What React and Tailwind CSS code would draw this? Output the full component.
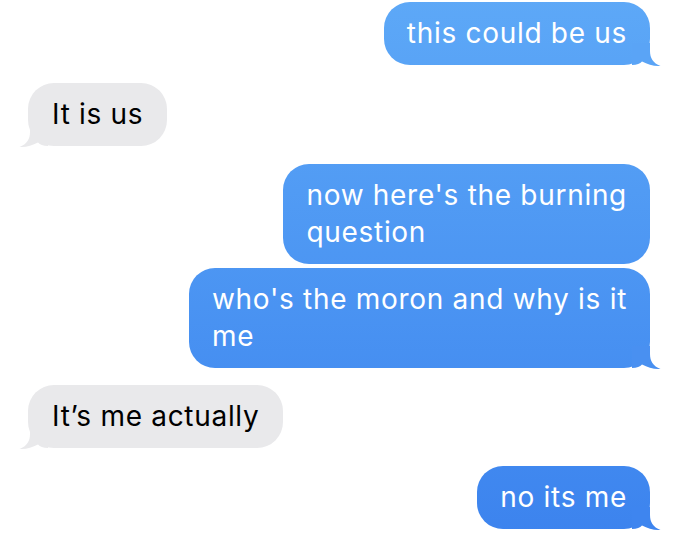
const messages = [
  { id: 1, me: true, lines: ['this could be us'], mt: 'mt-[2px]', tail: '#5aa4f6' },
  { id: 2, me: false, lines: ['It is us'], mt: 'mt-[18px]' },
  { id: 3, me: true, lines: ["now here's the burning", 'question'], mt: 'mt-[18px]' },
  { id: 4, me: true, lines: ["who's the moron and why is it", 'me'], mt: 'mt-[4px]', tail: '#4990f1' },
  { id: 5, me: false, lines: ['It\u2019s me actually'], mt: 'mt-[17px]' },
  { id: 6, me: true, lines: ['no its me'], mt: 'mt-[18px]', tail: '#3e85ef' },
];

export default function App() {
  return (
    <main className="flex h-[538px] w-full flex-col overflow-hidden bg-white pl-[28px] pr-[30px] font-['Inter','Liberation_Sans',sans-serif]">
      {messages.map((msg) => (
        <Bubble key={msg.id} msg={msg} />
      ))}
    </main>
  );
}

function Bubble({ msg }) {
  const text = msg.lines.map((line, i) => (
    <span key={i} className="block whitespace-nowrap">{line}</span>
  ));

  if (msg.me) {
    return (
      <div className={`relative self-end ${msg.mt}`}>
        <div className="relative z-10 rounded-[26px] bg-gradient-to-b from-[#5da8f7] to-[#3c83ee] bg-fixed px-[23px] py-[13px] text-[28px] leading-[37px] tracking-[0.7px] text-white">
          {text}
        </div>
        {msg.tail && (
          <svg className="absolute -bottom-[2px] -right-[12px] z-20" width="30" height="24" viewBox="0 0 30 24">
            <path d="M18 0 L18 8 C18 15 21 20 28.5 23 C22 23.6 16 21.5 10 18.5 C8 20.5 5 22 0 22 L0 0 Z" fill={msg.tail} />
          </svg>
        )}
      </div>
    );
  }

  return (
    <div className={`relative self-start ${msg.mt}`}>
      <div className="relative z-10 rounded-[26px] bg-[#e9e9eb] px-[24px] py-[13px] text-[28px] leading-[37px] tracking-[0.7px] text-black">
        {text}
      </div>
      <svg className="absolute -bottom-[2px] -left-[10px] z-20" width="30" height="24" viewBox="0 0 30 24">
        <path d="M12 0 L12 8 C12 15 9 20 1.5 23 C8 23.6 14 21.5 20 18.5 C22 20.5 25 22 30 22 L30 0 Z" fill="#e9e9eb" />
      </svg>
    </div>
  );
}
